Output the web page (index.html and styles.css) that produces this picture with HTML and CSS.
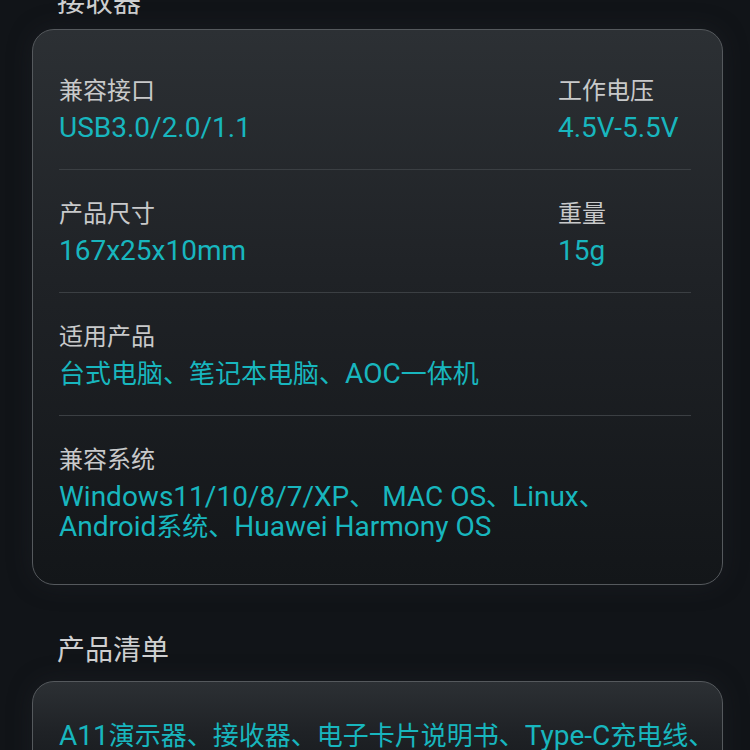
FILE: index.html
```html
<!DOCTYPE html>
<html lang="zh-CN">
<head>
<meta charset="utf-8">
<title>接收器</title>
<link rel="stylesheet" href="styles.css">
</head>
<body>
<main class="page">
  <section class="section section-first">
    <h2 class="section-title">接收器</h2>
    <div class="card card-spec">
      <div class="row row-split">
        <div class="item">
          <div class="label">兼容接口</div>
          <div class="value">USB3.0/2.0/1.1</div>
        </div>
        <div class="item">
          <div class="label">工作电压</div>
          <div class="value">4.5V-5.5V</div>
        </div>
      </div>
      <div class="row row-split">
        <div class="item">
          <div class="label">产品尺寸</div>
          <div class="value">167x25x10mm</div>
        </div>
        <div class="item">
          <div class="label">重量</div>
          <div class="value">15g</div>
        </div>
      </div>
      <div class="row">
        <div class="item">
          <div class="label">适用产品</div>
          <div class="value"><span class="cjk">台式电脑、笔记本电脑、</span>AOC<span class="cjk">一体机</span></div>
        </div>
      </div>
      <div class="row">
        <div class="item">
          <div class="label">兼容系统</div>
          <div class="value">Windows11/10/8/7/XP<span class="cjk">、</span> MAC OS<span class="cjk">、</span>Linux<span class="cjk">、</span><br>Android<span class="cjk">系统、</span>Huawei Harmony OS</div>
        </div>
      </div>
    </div>
  </section>
  <section class="section">
    <h2 class="section-title">产品清单</h2>
    <div class="card card-list">
      <div class="row">
        <div class="value">A11<span class="cjk">演示器、接收器、电子卡片说明书、</span>Type-C<span class="cjk">充电线、</span></div>
      </div>
    </div>
  </section>
</main>
</body>
</html>
```

FILE: styles.css
```css
html, body {
  margin: 0;
  padding: 0;
  background: #111418;
}

body {
  width: 750px;
  height: 750px;
  overflow: hidden;
  font-family: "Roboto", "Noto Sans CJK SC", sans-serif;
  -webkit-font-smoothing: antialiased;
}

.page {
  margin-top: -18px;
  padding: 0 27px 0 32px;
  display: flex;
  flex-direction: column;
  gap: 45px;
}

.section {
  display: flex;
  flex-direction: column;
  gap: 15px;
}

.section-first {
  gap: 11px;
}

.section-title {
  margin: 0;
  padding-left: 25px;
  font-size: 28px;
  line-height: 36px;
  font-weight: 400;
  color: #cfd0d1;
  font-family: "Noto Sans CJK SC", sans-serif;
}

.card {
  border: 1.5px solid #55595d;
  border-radius: 22px;
  background: linear-gradient(180deg, #2c3034 0%, #1f2226 45%, #131619 100%);
  padding: 17px 31px 16px 26px;
  box-shadow: 0 0 24px rgba(40, 44, 48, 0.35);
}

.row {
  padding: 26px 0 26px;
}

.row + .row {
  border-top: 1.5px solid #3b3f43;
}

.row-split {
  display: grid;
  grid-template-columns: 1fr 133px;
}

.item {
  display: flex;
  flex-direction: column;
  gap: 8px;
}

.label {
  font-family: "Noto Sans CJK SC", sans-serif;
  font-size: 24px;
  line-height: 32px;
  color: #c8c9ca;
}

.value {
  font-size: 28px;
  line-height: 30px;
  color: #18b6be;
  white-space: nowrap;
}

.cjk {
  font-family: "Noto Sans CJK SC", sans-serif;
  font-size: 26px;
  line-height: 1;
}

.card-list .row {
  padding-top: 22px;
}
```
